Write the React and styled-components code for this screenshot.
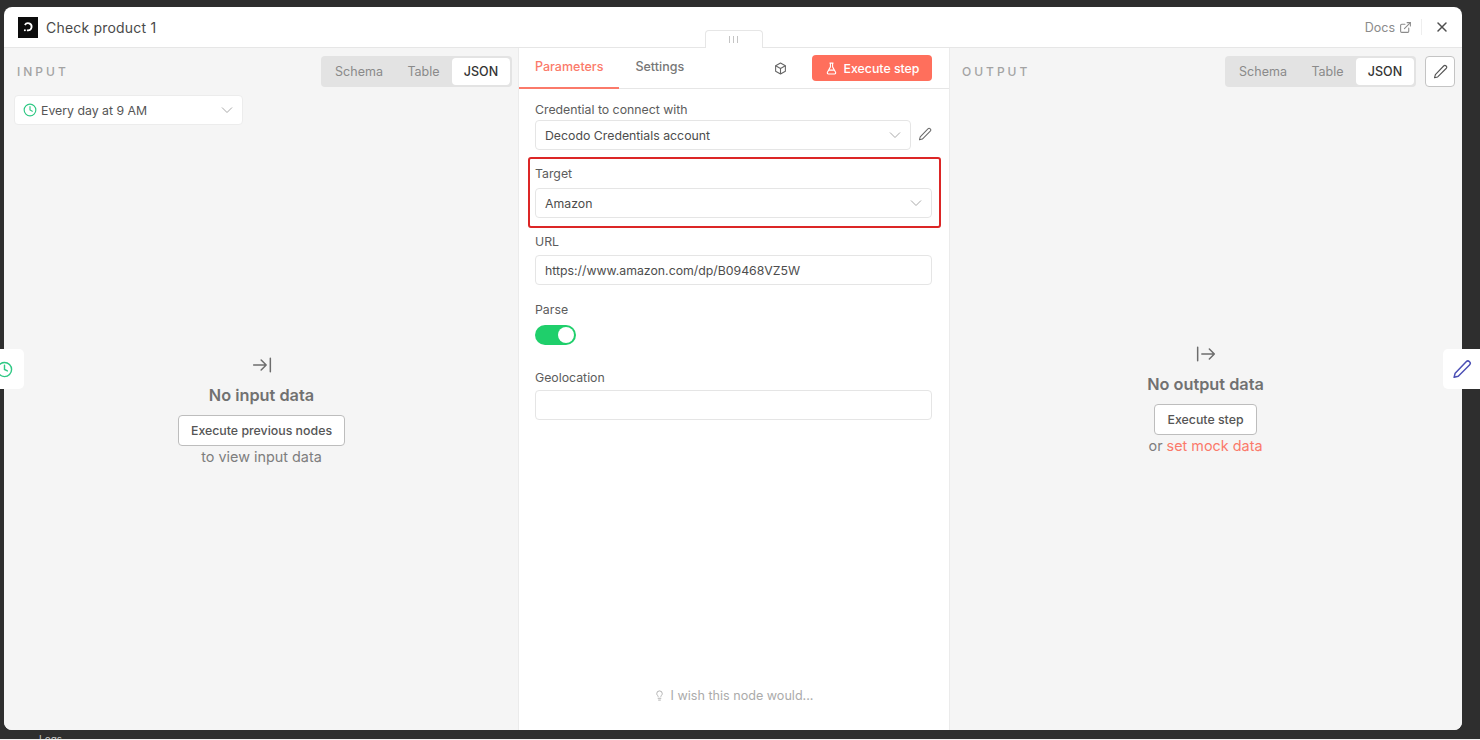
import React from "react";
import styled, { createGlobalStyle } from "styled-components";

const Global = createGlobalStyle`
  html, body { margin: 0; padding: 0; width: 1480px; height: 740px; overflow: hidden; background: #2e2e2e; }
  * { box-sizing: border-box; }
  body { font-family: Inter, "Liberation Sans", sans-serif; -webkit-font-smoothing: antialiased; }
`;

const Page = styled.div`
  position: relative;
  width: 1480px;
  height: 740px;
  padding: 7px 18px 10px 4px;
  overflow: hidden;
`;
const Modal = styled.div`
  position: relative;
  height: 723px;
  display: flex;
  flex-direction: column;
  background: #fff;
  border-radius: 8px;
  overflow: hidden;
`;
const Header = styled.header`
  height: 41px;
  flex: none;
  display: flex;
  align-items: center;
  padding: 0 14px 0 14px;
  border-bottom: 1px solid #e6e6e6;
`;
const Logo = styled.div`
  width: 20px;
  height: 21px;
  background: #0c0c0c;
  display: flex;
  align-items: center;
  justify-content: center;
`;
const Title = styled.div`
  margin-left: 8px;
  font-size: 14px;
  color: #4a4a4a;
  flex: 1;
  letter-spacing: 0.2px;
`;
const Docs = styled.div`
  display: flex;
  align-items: center;
  gap: 4px;
  font-size: 12.5px;
  color: #8b8b8b;
  padding-right: 9px;
  border-right: 1px solid #eeeeee;
  height: 16px;
`;
const CloseBtn = styled.div`
  display: flex;
  margin-left: 14px;
  color: #4f4f4f;
`;
const Body = styled.div`
  flex: 1;
  min-height: 0;
  display: grid;
  grid-template-columns: 514px 432px 1fr;
`;
const SidePanel = styled.section`
  background: #f5f5f5;
  display: flex;
  flex-direction: column;
  padding: ${(p) => p.$pad};
  min-width: 0;
`;
const PanelHead = styled.div`
  display: flex;
  align-items: center;
  justify-content: space-between;
  height: 31px;
`;
const PanelLabel = styled.div`
  font-size: 12px;
  font-weight: 500;
  letter-spacing: 3px;
  color: #a3a3a3;
`;
const HeadRight = styled.div`
  display: flex;
  align-items: center;
  gap: 9px;
`;
const Seg = styled.div`
  height: 31px;
  width: 191px;
  display: flex;
  align-items: center;
  padding: 2px;
  background: #e3e3e3;
  border-radius: 4px;
`;
const SegItem = styled.div`
  height: 27px;
  display: flex;
  align-items: center;
  justify-content: center;
  width: ${(p) => p.$w}px;
  font-size: 12.5px;
  font-weight: ${(p) => (p.$active ? 500 : 400)};
  color: ${(p) => (p.$active ? "#333" : "#8a8a8a")};
  background: ${(p) => (p.$active ? "#fff" : "transparent")};
  border-radius: 4px;
`;
const IconBtn = styled.div`
  width: 30px;
  height: 31px;
  background: #fff;
  border: 1px solid #c4c4c4;
  border-radius: 4px;
  display: flex;
  align-items: center;
  justify-content: center;
  color: #555;
`;
const TriggerSelect = styled.div`
  margin: 8px 0 0 -3px;
  width: 229px;
  height: 30px;
  display: flex;
  align-items: center;
  padding: 0 9px 0 8px;
  gap: 4px;
  background: #fff;
  border: 1px solid #ececec;
  border-radius: 4px;
  font-size: 12.3px;
  color: #555;
`;
const Grow = styled.span`
  flex: 1;
`;
const Empty = styled.div`
  flex: 1;
  display: flex;
  flex-direction: column;
  align-items: center;
  justify-content: flex-start;
  padding-top: ${(p) => p.$top}px;
  margin-left: ${(p) => p.$shift}px;
`;
const EmptyIcon = styled.div`
  height: 20px;
  display: flex;
  color: #6d6d6d;
`;
const EmptyTitle = styled.div`
  margin-top: 9px;
  font-size: 16.3px;
  line-height: 22px;
  font-weight: 600;
  color: #717171;
`;
const OutlineBtn = styled.div`
  margin-top: 9px;
  height: 31px;
  padding: 0 12px;
  display: flex;
  align-items: center;
  background: #fff;
  border: 1px solid #bdbdbd;
  border-radius: 4px;
  font-size: 12.35px;
  font-weight: 500;
  color: #555;
`;
const EmptyNote = styled.div`
  margin-top: 1px;
  font-size: 14.4px;
  line-height: 20px;
  color: #7e7e7e;
`;
const Link = styled.span`
  color: #fb7a6a;
`;
const Center = styled.section`
  display: flex;
  flex-direction: column;
  background: #fff;
  border-left: 1px solid #ebebeb;
  border-right: 1px solid #ebebeb;
  min-width: 0;
`;
const TabRow = styled.div`
  height: 41px;
  flex: none;
  display: flex;
  align-items: flex-start;
  border-bottom: 1px solid #e6e6e6;
`;
const Tab = styled.div`
  height: 41px;
  padding: 10px 16px 0;
  font-size: 12.5px;
  font-weight: 500;
  line-height: 17px;
  color: ${(p) => (p.$active ? "#fb7a6a" : "#777")};
  border-bottom: ${(p) => (p.$active ? "2px solid #fb7a6a" : "none")};
`;
const TabTools = styled.div`
  margin-left: auto;
  padding: 7px 17px 0 0;
  display: flex;
  align-items: center;
  gap: 25px;
  color: #666;
`;
const RunBtn = styled.div`
  width: 120px;
  height: 26px;
  display: flex;
  align-items: center;
  justify-content: center;
  gap: 6px;
  background: #ff6f5c;
  color: #fff;
  border-radius: 4px;
  font-size: 12.3px;
  font-weight: 500;
`;
const Form = styled.div`
  flex: 1;
  display: flex;
  flex-direction: column;
  padding: 13px 17px 0 16px;
`;
const Label = styled.div`
  font-size: 12.3px;
  line-height: 16px;
  color: #5c5c5c;
`;
const Row = styled.div`
  display: flex;
  align-items: center;
  gap: 7px;
  color: #6b6b6b;
`;
const Field = styled.div`
  flex: 1;
  height: 30px;
  margin-top: ${(p) => p.$mt}px;
  display: flex;
  align-items: center;
  justify-content: space-between;
  padding: 0 9px;
  background: #fff;
  border: 1px solid #e5e5e5;
  border-radius: 4px;
  font-size: 12.3px;
  color: #4d4d4d;
`;
const Highlight = styled.div`
  margin: 7px -9px 0 -7px;
  height: 71px;
  padding: 7px 7px 0 5px;
  border: 2px solid #dc2626;
  border-radius: 3px;
`;
const Block = styled.div`
  margin-top: ${(p) => p.$mt}px;
`;
const Toggle = styled.div`
  margin-top: 7px;
  width: 41px;
  height: 20px;
  background: #1fcf6b;
  border-radius: 10px;
  display: flex;
  align-items: center;
  justify-content: flex-end;
  padding-right: 2px;
`;
const Knob = styled.div`
  width: 16px;
  height: 16px;
  border-radius: 50%;
  background: #fff;
`;
const Wish = styled.div`
  height: 42px;
  flex: none;
  display: flex;
  align-items: flex-start;
  justify-content: center;
  gap: 5px;
  font-size: 12.6px;
  line-height: 16px;
  color: #ababab;
  & > svg { margin-top: 1px; }
`;
const Handle = styled.div`
  position: absolute;
  left: 701px;
  top: 23px;
  width: 58px;
  height: 18px;
  background: #fff;
  border: 1px solid #e6e6e6;
  border-bottom: none;
  border-radius: 4px 4px 0 0;
  display: flex;
  align-items: center;
  justify-content: center;
  gap: 1px;
  padding-right: 2px;
`;
const Grip = styled.span`
  width: 1px;
  height: 7px;
  background: #c4c4c4;
  margin: 0 1px;
`;
const SideTab = styled.div`
  position: absolute;
  top: 349px;
  height: 40px;
  background: #fff;
  display: flex;
  align-items: center;
  & > svg { flex: none; }
  ${(p) =>
    p.$side === "left"
      ? "left: 0; width: 24px; border-radius: 0 5px 5px 0; justify-content: flex-end; padding-right: 11px; color: #2fc884;"
      : "left: 1443px; width: 37px; border-radius: 5px 0 0 5px; padding-left: 9px; color: #4b4fb5;"}
`;
const Behind = styled.div`
  position: absolute;
  left: 39px;
  top: 733px;
  font-size: 10px;
  line-height: 12px;
  color: #c9c9c9;
`;
const BottomEdge = styled.div`
  position: absolute;
  left: 0;
  right: 0;
  bottom: 0;
  height: 1px;
  background: #f0f0f0;
`;

const Chevron = () => (
  <svg width="12" height="12" viewBox="0 0 12 12" fill="none" stroke="#a9a9a9" strokeWidth="1">
    <path d="M1 3.5l5 5 5-5" />
  </svg>
);
const Pencil = ({ size = 14 }) => (
  <svg width={size} height={size} viewBox="0 0 24 24" fill="none" stroke="currentColor" strokeWidth="1.8" strokeLinecap="round" strokeLinejoin="round">
    <path d="M17 3.2a2.8 2.8 0 0 1 4 4L7.5 20.7 2.5 22l1.3-5z" />
  </svg>
);
const Clock = ({ size = 14 }) => (
  <svg width={size} height={size} viewBox="0 0 24 24" fill="none" stroke="#2fc884" strokeWidth="2" strokeLinecap="round">
    <circle cx="12" cy="12" r="10" />
    <path d="M12 6v6l4 2" />
  </svg>
);

export default function App() {
  return (
    <Page>
      <Global />
      <Modal>
        <Header>
          <Logo>
            <svg width="14" height="14" viewBox="0 0 14 14" fill="none">
              <path d="M3.9 5A3.6 3.6 0 1 1 7 10.4H5.9" stroke="#fff" strokeWidth="1.8" />
              <circle cx="3.9" cy="10.2" r="1" fill="#fff" />
            </svg>
          </Logo>
          <Title>Check product 1</Title>
          <Docs>
            Docs
            <svg width="13" height="13" viewBox="0 0 24 24" fill="none" stroke="#8b8b8b" strokeWidth="2" strokeLinecap="round" strokeLinejoin="round">
              <path d="M18 13v6a2 2 0 0 1-2 2H5a2 2 0 0 1-2-2V8a2 2 0 0 1 2-2h6" />
              <path d="M15 3h6v6" />
              <path d="M10 14L21 3" />
            </svg>
          </Docs>
          <CloseBtn>
            <svg width="12" height="12" viewBox="0 0 12 12" stroke="currentColor" strokeWidth="1.5" strokeLinecap="round">
              <path d="M2 2l8 8M10 2l-8 8" />
            </svg>
          </CloseBtn>
        </Header>
        <Body>
          <SidePanel $pad="8px 6px 0 13px">
            <PanelHead>
              <PanelLabel>INPUT</PanelLabel>
              <HeadRight>
                <Seg>
                  <SegItem $w={72}>Schema</SegItem>
                  <SegItem $w={57}>Table</SegItem>
                  <SegItem $w={58} $active>JSON</SegItem>
                </Seg>
              </HeadRight>
            </PanelHead>
            <TriggerSelect>
              <Clock />
              <Grow>Every day at 9 AM</Grow>
              <Chevron />
            </TriggerSelect>
            <Empty $top={230} $shift={-6}>
              <EmptyIcon>
                <svg width="20" height="20" viewBox="0 0 24 24" fill="none" stroke="currentColor" strokeWidth="1.8" strokeLinecap="round" strokeLinejoin="round">
                  <path d="M2 12h15M11 6l6 6-6 6M22 4v16" />
                </svg>
              </EmptyIcon>
              <EmptyTitle>No input data</EmptyTitle>
              <OutlineBtn>Execute previous nodes</OutlineBtn>
              <EmptyNote>to view input data</EmptyNote>
            </Empty>
          </SidePanel>
          <Center>
            <TabRow>
              <Tab $active>Parameters</Tab>
              <Tab>Settings</Tab>
              <TabTools>
                <svg width="13" height="13" viewBox="0 0 24 24" fill="none" stroke="currentColor" strokeWidth="2" strokeLinejoin="round">
                  <path d="M12 2l9 5v10l-9 5-9-5V7z" />
                  <path d="M3 7l9 5 9-5M12 12v10" />
                </svg>
                <RunBtn>
                  <svg width="13" height="13" viewBox="0 0 24 24" fill="none" stroke="#fff" strokeWidth="2" strokeLinecap="round" strokeLinejoin="round">
                    <path d="M9 2h6M10 2v7L4.5 19a2 2 0 0 0 1.8 3h11.4a2 2 0 0 0 1.8-3L14 9V2M7 15h10" />
                  </svg>
                  Execute step
                </RunBtn>
              </TabTools>
            </TabRow>
            <Form>
              <Label>Credential to connect with</Label>
              <Row>
                <Field $mt={2}>
                  Decodo Credentials account
                  <Chevron />
                </Field>
                <Pencil />
              </Row>
              <Highlight>
                <Label>Target</Label>
                <Field $mt={6}>
                  Amazon
                  <Chevron />
                </Field>
              </Highlight>
              <Block $mt={6}>
                <Label>URL</Label>
                <Field $mt={5}>https://www.amazon.com/dp/B09468VZ5W</Field>
              </Block>
              <Block $mt={17}>
                <Label>Parse</Label>
                <Toggle><Knob /></Toggle>
              </Block>
              <Block $mt={25}>
                <Label>Geolocation</Label>
                <Field $mt={4} />
              </Block>
            </Form>
            <Wish>
              <svg width="11" height="13" viewBox="0 0 24 24" fill="none" stroke="#ababab" strokeWidth="2" strokeLinecap="round" strokeLinejoin="round">
                <path d="M15 14c.2-1 .7-1.7 1.5-2.5 1-.9 1.5-2.2 1.5-3.5A6 6 0 0 0 6 8c0 1 .2 2.2 1.5 3.5.7.7 1.3 1.5 1.5 2.5" />
                <path d="M9 18h6M10 22h4" />
              </svg>
              I wish this node would...
            </Wish>
          </Center>
          <SidePanel $pad="8px 7px 0 12px">
            <PanelHead>
              <PanelLabel>OUTPUT</PanelLabel>
              <HeadRight>
                <Seg>
                  <SegItem $w={72}>Schema</SegItem>
                  <SegItem $w={57}>Table</SegItem>
                  <SegItem $w={58} $active>JSON</SegItem>
                </Seg>
                <IconBtn><Pencil size={15} /></IconBtn>
              </HeadRight>
            </PanelHead>
            <Empty $top={257} $shift={-6}>
              <EmptyIcon>
                <svg width="20" height="20" viewBox="0 0 24 24" fill="none" stroke="currentColor" strokeWidth="1.8" strokeLinecap="round" strokeLinejoin="round">
                  <path d="M2 4v16M7 12h15M16 6l6 6-6 6" />
                </svg>
              </EmptyIcon>
              <EmptyTitle>No output data</EmptyTitle>
              <OutlineBtn>Execute step</OutlineBtn>
              <EmptyNote>or <Link>set mock data</Link></EmptyNote>
            </Empty>
          </SidePanel>
        </Body>
        <Handle><Grip /><Grip /><Grip /></Handle>
      </Modal>
      <SideTab $side="left"><Clock size={17} /></SideTab>
      <SideTab $side="right"><Pencil size={20} /></SideTab>
      <Behind>Logs</Behind>
      <BottomEdge />
    </Page>
  );
}
